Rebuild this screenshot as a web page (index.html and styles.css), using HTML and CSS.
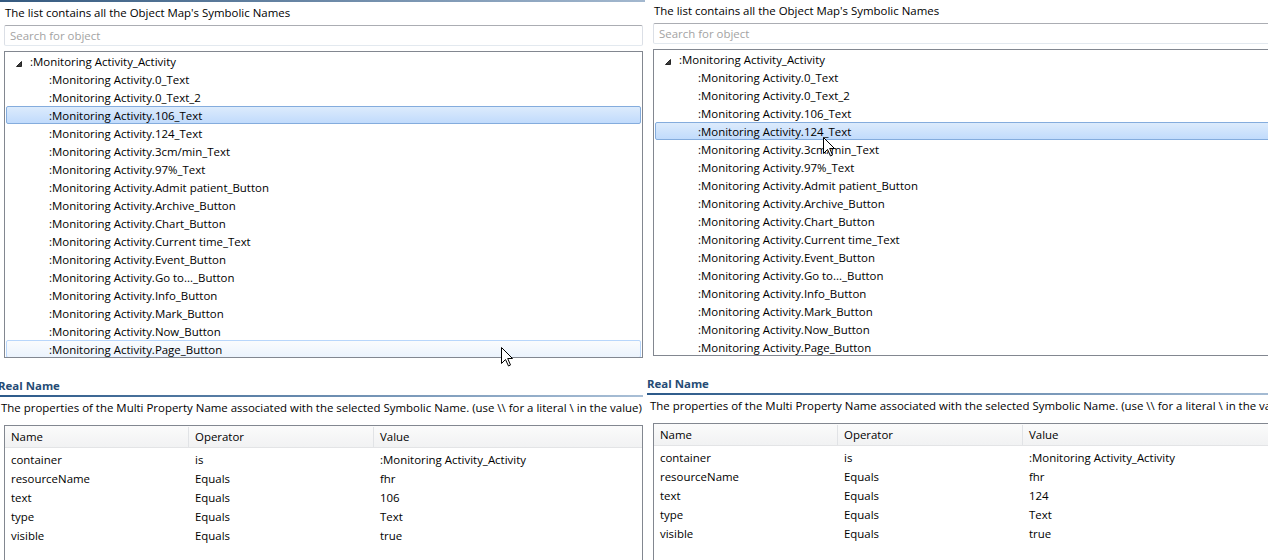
FILE: index.html
```html
<!DOCTYPE html>
<html>
<head>
<meta charset="utf-8">
<link rel="stylesheet" href="styles.css">
</head>
<body>
<div class="panel panel-left">
  <div class="topline"></div>
  <div class="caption">The list contains all the Object Map's Symbolic Names</div>
  <input class="search" type="text" placeholder="Search for object">
  <div class="tree">
    <div class="row root"><svg class="twisty" width="6" height="6" viewBox="0 0 6 6"><polygon points="5.5,0.5 5.5,5.5 0.5,5.5" fill="#3b3b3b" stroke="#262626" stroke-width="1"/></svg>:Monitoring Activity_Activity</div>
    <div class="row">:Monitoring Activity.0_Text</div>
    <div class="row">:Monitoring Activity.0_Text_2</div>
    <div class="row selected">:Monitoring Activity.106_Text</div>
    <div class="row">:Monitoring Activity.124_Text</div>
    <div class="row">:Monitoring Activity.3cm/min_Text</div>
    <div class="row">:Monitoring Activity.97%_Text</div>
    <div class="row">:Monitoring Activity.Admit patient_Button</div>
    <div class="row">:Monitoring Activity.Archive_Button</div>
    <div class="row">:Monitoring Activity.Chart_Button</div>
    <div class="row">:Monitoring Activity.Current time_Text</div>
    <div class="row">:Monitoring Activity.Event_Button</div>
    <div class="row">:Monitoring Activity.Go to..._Button</div>
    <div class="row">:Monitoring Activity.Info_Button</div>
    <div class="row">:Monitoring Activity.Mark_Button</div>
    <div class="row">:Monitoring Activity.Now_Button</div>
    <div class="row hover">:Monitoring Activity.Page_Button</div>
  </div>
  <div class="section-head">Real Name</div>
  <div class="desc">The properties of the Multi Property Name associated with the selected Symbolic Name. (use \\ for a literal \ in the value)</div>
  <div class="props">
    <div class="props-head"><div class="cell">Name</div><div class="cell">Operator</div><div class="cell">Value</div></div>
    <div class="props-body">
      <div class="prow"><div class="cell">container</div><div class="cell">is</div><div class="cell">:Monitoring Activity_Activity</div></div>
      <div class="prow"><div class="cell">resourceName</div><div class="cell">Equals</div><div class="cell">fhr</div></div>
      <div class="prow"><div class="cell">text</div><div class="cell">Equals</div><div class="cell">106</div></div>
      <div class="prow"><div class="cell">type</div><div class="cell">Equals</div><div class="cell">Text</div></div>
      <div class="prow"><div class="cell">visible</div><div class="cell">Equals</div><div class="cell">true</div></div>
    </div>
  </div>
</div>

<div class="panel panel-right">
  <div class="caption">The list contains all the Object Map's Symbolic Names</div>
  <input class="search" type="text" placeholder="Search for object">
  <div class="tree">
    <div class="row root"><svg class="twisty" width="6" height="6" viewBox="0 0 6 6"><polygon points="5.5,0.5 5.5,5.5 0.5,5.5" fill="#3b3b3b" stroke="#262626" stroke-width="1"/></svg>:Monitoring Activity_Activity</div>
    <div class="row">:Monitoring Activity.0_Text</div>
    <div class="row">:Monitoring Activity.0_Text_2</div>
    <div class="row">:Monitoring Activity.106_Text</div>
    <div class="row selected">:Monitoring Activity.124_Text</div>
    <div class="row">:Monitoring Activity.3cm/min_Text</div>
    <div class="row">:Monitoring Activity.97%_Text</div>
    <div class="row">:Monitoring Activity.Admit patient_Button</div>
    <div class="row">:Monitoring Activity.Archive_Button</div>
    <div class="row">:Monitoring Activity.Chart_Button</div>
    <div class="row">:Monitoring Activity.Current time_Text</div>
    <div class="row">:Monitoring Activity.Event_Button</div>
    <div class="row">:Monitoring Activity.Go to..._Button</div>
    <div class="row">:Monitoring Activity.Info_Button</div>
    <div class="row">:Monitoring Activity.Mark_Button</div>
    <div class="row">:Monitoring Activity.Now_Button</div>
    <div class="row">:Monitoring Activity.Page_Button</div>
  </div>
  <div class="section-head">Real Name</div>
  <div class="desc">The properties of the Multi Property Name associated with the selected Symbolic Name. (use \\ for a literal \ in the value)</div>
  <div class="props">
    <div class="props-head"><div class="cell">Name</div><div class="cell">Operator</div><div class="cell">Value</div></div>
    <div class="props-body">
      <div class="prow"><div class="cell">container</div><div class="cell">is</div><div class="cell">:Monitoring Activity_Activity</div></div>
      <div class="prow"><div class="cell">resourceName</div><div class="cell">Equals</div><div class="cell">fhr</div></div>
      <div class="prow"><div class="cell">text</div><div class="cell">Equals</div><div class="cell">124</div></div>
      <div class="prow"><div class="cell">type</div><div class="cell">Equals</div><div class="cell">Text</div></div>
      <div class="prow"><div class="cell">visible</div><div class="cell">Equals</div><div class="cell">true</div></div>
    </div>
  </div>
</div>

<svg class="cursor cursor-left" width="13" height="20" viewBox="0 0 13 20"><path d="M0.5 0.5 L0.5 16.5 L4.5 12.5 L7.5 19 L9.5 18 L6.7 11.5 L11.5 11.5 Z" fill="#fff" stroke="#000" stroke-width="1" stroke-linejoin="miter"/></svg>
<svg class="cursor cursor-right" width="13" height="20" viewBox="0 0 13 20"><path d="M0.5 0.5 L0.5 16.5 L4.5 12.5 L7.5 19 L9.5 18 L6.7 11.5 L11.5 11.5 Z" fill="#fff" stroke="#000" stroke-width="1" stroke-linejoin="miter"/></svg>
</body>
</html>
```

FILE: styles.css
```css
html, body {
  margin: 0;
  padding: 0;
}
body {
  position: relative;
  width: 1268px;
  height: 560px;
  overflow: hidden;
  background: #fff;
  display: flex;
  gap: 4px;
  font-family: "Open Sans", "Noto Sans", sans-serif;
  font-size: 11.45px;
  color: #000;
}
.panel {
  flex: 0 0 645px;
  width: 645px;
}
.topline {
  height: 2px;
  background: linear-gradient(to right, #34597f, #a3b8cf);
}
.caption {
  padding: 3px 0 0 5px;
  height: 16px;
  line-height: 16px;
  white-space: nowrap;
}
.search {
  display: block;
  box-sizing: border-box;
  width: calc(100% - 6px);
  height: 21px;
  margin: 4px 0 0 4px;
  padding: 0 5px;
  border: 1px solid #dbdfe6;
  border-top-color: #abadb3;
  border-bottom-color: #e3e9ef;
  border-radius: 2px;
  font: inherit;
  outline: none;
}
.search::placeholder {
  color: #a3a3a3;
}
.tree {
  box-sizing: border-box;
  height: 307px;
  margin: 5px 2px 0 4px;
  border: 1px solid #828790;
  overflow: hidden;
}
.row {
  box-sizing: border-box;
  height: 18px;
  line-height: 16px;
  margin: 0 1px;
  padding: 1px 0 0 42px;
  border: 1px solid transparent;
  border-radius: 2px;
  white-space: nowrap;
}
.row.root {
  padding-left: 9px;
}
.twisty {
  display: inline-block;
  vertical-align: -1px;
  margin-right: 8px;
}
.row.selected {
  border-color: #84acdd;
  background: linear-gradient(#dcebfc, #c1dbfc);
}
.row.hover {
  border-color: #b8d6fb;
  background: linear-gradient(#fafbfd, #ebf3fd);
}
.section-head {
  margin: 20px 2px 0 -2px;
  line-height: 15px;
  padding-bottom: 2px;
  font-weight: bold;
  color: #264b75;
  border-bottom: 2px solid transparent;
  border-image: linear-gradient(to right, #2b5989, #a9bfd6) 1;
  white-space: nowrap;
}
.desc {
  margin-top: 3px;
  padding-left: 1px;
  line-height: 16px;
  white-space: nowrap;
}
.props {
  box-sizing: border-box;
  height: 200px;
  margin: 9px 2px 0 4px;
  border: 1px solid #828790;
}
.props-head, .prow {
  display: grid;
  grid-template-columns: 184px 185px 1fr;
}
.props-head {
  height: 22px;
  box-sizing: border-box;
  padding-top: 1px;
  line-height: 20px;
  background: linear-gradient(#fbfbfb, #f1f2f3);
  border-bottom: 1px solid #e3e4e6;
}
.props-head .cell {
  border-right: 1px solid #e1e3e6;
}
.props-head .cell:last-child {
  border-right: none;
}
.cell {
  box-sizing: border-box;
  padding-left: 6px;
  white-space: nowrap;
  overflow: hidden;
}
.props-body {
  padding-top: 2px;
}
.prow {
  height: 19px;
  line-height: 19px;
}
.cursor {
  position: absolute;
}
.cursor-left {
  left: 501px;
  top: 347px;
}
.cursor-right {
  left: 823px;
  top: 137px;
}
```
